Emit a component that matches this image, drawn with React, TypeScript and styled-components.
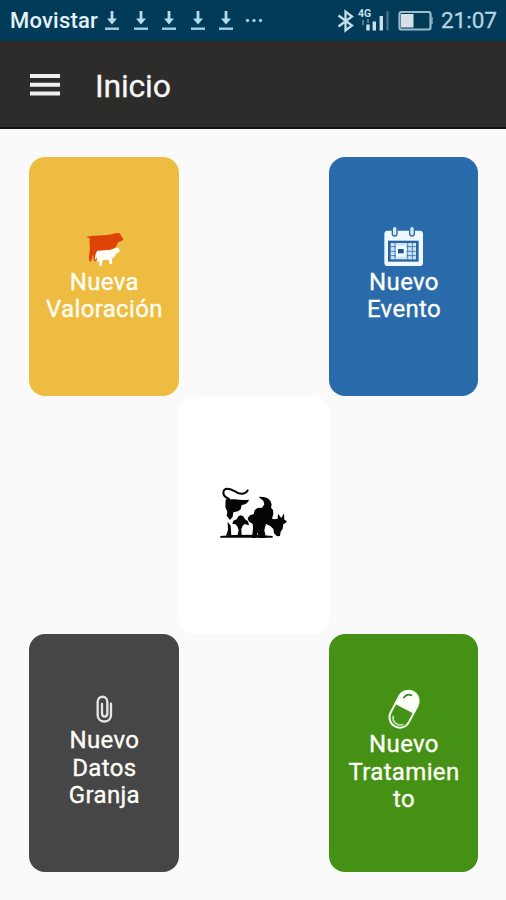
import React from "react";
import styled, { createGlobalStyle } from "styled-components";

const GlobalStyle = createGlobalStyle`
  * { box-sizing: border-box; }
  body { margin: 0; background: #fafafa; font-family: Roboto, "Liberation Sans", sans-serif; }
  svg { display: block; flex: none; }
`;

const Screen = styled.div`
  display: flex;
  flex-direction: column;
  width: 506px;
  height: 900px;
  overflow: hidden;
  background: #fafafa;
`;

const StatusBar = styled.header`
  display: flex;
  align-items: center;
  justify-content: space-between;
  flex: none;
  height: 41px;
  padding: 0 9px 0 10px;
  background: #023b58;
`;

const StatusGroup = styled.div`
  display: flex;
  align-items: center;
`;

const Carrier = styled.span`
  width: 94px;
  color: #e3f1f8;
  font-size: 22px;
  font-weight: 500;
  line-height: 41px;
  letter-spacing: 0.2px;
`;

const Downloads = styled.div`
  display: flex;
  gap: 12.5px;
  margin-right: 11px;
`;

const Clock = styled.span`
  margin-left: 8px;
  color: #b5d4e3;
  font-size: 22.5px;
  line-height: 41px;
  -webkit-text-stroke: 0.3px #b5d4e3;
`;

const AppBar = styled.nav`
  display: flex;
  align-items: center;
  flex: none;
  gap: 33px;
  height: 88px;
  padding: 2px 0 0 29px;
  background: #2e2c2a;
  border-bottom: 2px solid #11100f;
`;

const MenuButton = styled.button`
  display: block;
  padding: 0;
  border: 0;
  background: none;
`;

const Title = styled.h1`
  margin: 2px 0 0;
  color: #f6f6f6;
  font-size: 32px;
  font-weight: 400;
  line-height: 40px;
  letter-spacing: -0.2px;
  -webkit-text-stroke: 0.3px #f6f6f6;
`;

const TileGrid = styled.main`
  display: grid;
  grid-template-columns: repeat(3, 149.8px);
  grid-template-rows: repeat(3, 238.4px);
  grid-template-areas: "a . b" ". c ." "d . e";
  padding: 28.2px 0 0 29px;
`;

const Tile = styled.button<{ $area: string; $bg: string }>`
  grid-area: ${(p) => p.$area};
  display: flex;
  flex-direction: column;
  align-items: center;
  justify-content: center;
  padding: 0 14px 0 15px;
  border: 0;
  border-radius: 16px;
  background: ${(p) => p.$bg};
  font-family: inherit;
`;

const Label = styled.span`
  color: #fdfdf6;
  font-size: 24px;
  line-height: 27.3px;
  letter-spacing: 0.35px;
  text-align: center;
  white-space: pre-line;
  -webkit-text-stroke: 0.35px #fdfdf6;
`;

const DownloadIcon = () => (
  <svg width="16" height="22" viewBox="0 0 16 22">
    <path d="M8 1v11" stroke="#b5dcee" strokeWidth="2.8" />
    <path d="M3 8.5h10l-5 6z" fill="#b5dcee" />
    <path d="M1 18.7h14" stroke="#a5cfe3" strokeWidth="2.4" />
  </svg>
);

const MoreIcon = () => (
  <svg width="18" height="6" viewBox="0 0 18 6" fill="#9dc8dc">
    <circle cx="2.5" cy="2.5" r="1.7" />
    <circle cx="9" cy="2.5" r="1.7" />
    <circle cx="15.5" cy="2.5" r="1.7" />
  </svg>
);

const BluetoothIcon = () => (
  <svg width="20" height="24" viewBox="0 0 20 24" fill="none" stroke="#c3deea" strokeWidth="2.3">
    <path d="M1.5 6.5l13.5 10-6.5 5v-19l6.5 5-13.5 10" />
  </svg>
);

const SignalIcon = () => (
  <svg width="41" height="30" viewBox="0 0 41 30">
    <text x="1" y="11" fill="#c3dfeb" fontFamily="Roboto" fontSize="10.5" fontWeight="700">4G</text>
    <path d="M11 24.5v-6M17.3 24.5v-9M24.3 24.5V10" stroke="#c6e0ec" strokeWidth="3.4" />
    <path d="M6 14v5M11 13v4" stroke="#4d7b92" strokeWidth="2" />
    <path d="M30.5 24.5V5" stroke="#416f86" strokeWidth="2.4" />
  </svg>
);

const BatteryIcon = () => (
  <svg width="35" height="20" viewBox="0 0 35 20">
    <rect x="1.5" y="1" width="31" height="17.5" rx="2" fill="none" stroke="#9dbccb" strokeWidth="2.2" />
    <path d="M3 3h12.5v13.5H3z" fill="#d4e2e8" />
    <path d="M34 6v7" stroke="#9dbccb" strokeWidth="1.2" />
  </svg>
);

const MenuIcon = () => (
  <svg width="33" height="24" viewBox="0 0 33 24">
    <path d="M1 3h30M1 11.8h30M1 20.6h30" stroke="#efefed" strokeWidth="4" />
  </svg>
);

const CowAndCalfIcon = () => (
  <svg width="40" height="40" viewBox="27 27 120 120" overflow="visible">
    <path
      fill="#e04308"
      d="M34 53q3-5 14-5l34-2q22-1 34-5l10-2 8 1 5 8 6 10-6 6-9 2-7 14-13 9-20 6-22 1-3 9 1 18-9 1-3-20-2 9-3 9-1 4q-8-4-6-14l3-28q-2-18-1-31z"
    />
    <path
      fill="#fffdf5"
      d="M70 92q18-2 36-3l15-4 7-2 6 6-1 8-9 3-4 9-9 7 1 15-8 1-3-13-16 1-3 3-1 14-8 1v-13l-8-1 1-15-3 9-3 1q-1-16 7-27z"
    />
  </svg>
);

const CalendarIcon = () => (
  <svg width="40" height="40" viewBox="27 27 120 120" overflow="visible">
    <rect x="28" y="32" width="116" height="106" rx="10" fill="#eef8ff" />
    <path d="M59 25v16M111 25v16" stroke="#2b6cb0" strokeWidth="18" strokeLinecap="round" />
    <path d="M59 26v15M111 26v15" stroke="#d8eafa" strokeWidth="10" strokeLinecap="round" />
    <path d="M39 62h92v63H39z" fill="#2865a5" />
    <path d="M47 69h76v49H47z" fill="#cfe4f7" />
    <path d="M60 69v49M98 69v49M112 69v49M47 80h75M47 94h75M47 107h75" stroke="#4b80b5" strokeWidth="3" />
    <path d="M63 77h31v33H63z" fill="#f2faff" />
    <path d="M69 87h17v13H69z" fill="#1d568e" />
  </svg>
);

const GrazingCowIcon = () => (
  <svg width="90" height="70" viewBox="-3 5 270 210">
    <path
      d="M57 62C32 52 38 31 53 31c19 0 28 19 45 15 9-2 13-5 15-10"
      fill="none"
      stroke="#050505"
      strokeWidth="6"
      strokeLinecap="round"
    />
    <g fill="#050505">
      <path d="M47 63h28q20 3 42 1-3 13-22 16l-3 13-8 6-14 3-2 13-8 10-10-13 2-12-6-14z" />
      <path d="M67 137l3-10 10-4 5-9 7-3 8 3 5 9 9 6 3 12-13-4-6 5-4 10 1 22H82l4-20-5-12-6-5z" />
      <path d="M53 130l9 12 2 30H48l6-17z" />
      <path d="M146 55l15 1 12 4 8 7 4 11-2 10 6 7 1 12-4 14 8 2 9-2 1-15 10 13 8-14 1 19 8 5-5 6-6 2-2 14-6 9-2 13-9 1-9-9-2-13-9-9-13-6-3 10-2 9 5 23h-22l-3-17-4 17h-13l3-30-1-12-12-8-3-10 8-9 10-2 3-12 8-7 14-1 7-10-3-11-8-6z" />
      <path d="M31 173l38-3 71-1 48 4v5H31z" />
    </g>
  </svg>
);

const PaperclipIcon = () => (
  <svg width="30" height="30" viewBox="27 36 90 90" overflow="visible" fill="none" stroke="#e5e5e5" strokeWidth="7" strokeLinecap="round">
    <path d="M93 56v34c0 26-40 26-40 0V51c0-21 29-21 29 0v34c0 13-16 13-16 0V57" />
  </svg>
);

const PillIcon = () => (
  <svg width="40" height="38" viewBox="27 37 120 114" overflow="visible">
    <g transform="rotate(28 87 86)">
      <rect x="56" y="27" width="62" height="117" rx="31" fill="#439116" stroke="#f1ffe9" strokeWidth="6" />
      <path d="M56 84V58a31 31 0 0 1 62 0v26z" fill="#fcfffa" />
      <path d="M70 55q2-16 17-17" fill="none" stroke="#3f8221" strokeWidth="5" strokeLinecap="round" />
      <path d="M68 118q3 16 20 17 13 0 18-9" fill="none" stroke="#c4e4b4" strokeWidth="5" />
    </g>
  </svg>
);

const tiles = [
  { area: "a", bg: "#eebc40", label: "Nueva\nValoración", Icon: CowAndCalfIcon },
  { area: "b", bg: "#2a6bac", label: "Nuevo\nEvento", Icon: CalendarIcon },
  { area: "c", bg: "#ffffff", label: "", Icon: GrazingCowIcon },
  { area: "d", bg: "#464646", label: "Nuevo\nDatos\nGranja", Icon: PaperclipIcon },
  { area: "e", bg: "#459115", label: "Nuevo\nTratamien\nto", Icon: PillIcon },
];

export default function App() {
  return (
    <>
      <GlobalStyle />
      <Screen>
        <StatusBar>
          <StatusGroup>
            <Carrier>Movistar</Carrier>
            <Downloads>
              {[0, 1, 2, 3, 4].map((n) => (
                <DownloadIcon key={n} />
              ))}
            </Downloads>
            <MoreIcon />
          </StatusGroup>
          <StatusGroup>
            <BluetoothIcon />
            <SignalIcon />
            <BatteryIcon />
            <Clock>21:07</Clock>
          </StatusGroup>
        </StatusBar>
        <AppBar>
          <MenuButton aria-label="Menú">
            <MenuIcon />
          </MenuButton>
          <Title>Inicio</Title>
        </AppBar>
        <TileGrid>
          {tiles.map(({ area, bg, label, Icon }) => (
            <Tile key={area} $area={area} $bg={bg}>
              <Icon />
              {label && <Label>{label}</Label>}
            </Tile>
          ))}
        </TileGrid>
      </Screen>
    </>
  );
}
